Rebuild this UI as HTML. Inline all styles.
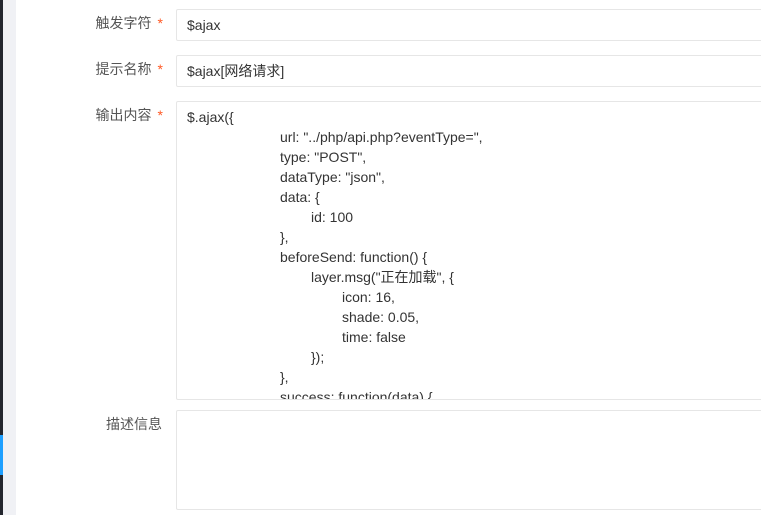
<!DOCTYPE html><html><head><meta charset="utf-8"><style>
body{margin:0;width:761px;height:515px;overflow:hidden;background:#fff;font-family:"Liberation Sans","Noto Sans CJK SC",sans-serif;font-size:14px;color:#333;position:relative}
.dk{position:absolute;left:0;top:0;width:3px;height:515px;background:#23262e}
.gr{position:absolute;left:3px;top:0;width:13px;height:515px;background:#f0f1f5}
.bl{position:absolute;left:0;top:435px;width:3px;height:40px;background:#1e9fff}
.lb{position:absolute;right:600px;color:#555;white-space:nowrap;line-height:20px}
.lb i{font-style:normal;color:#ff5722;margin-left:6px}
.in{position:absolute;left:176px;width:600px;border:1px solid #e6e6e6;border-radius:2px;box-sizing:border-box;overflow:hidden}
.t{position:absolute;white-space:pre;line-height:20px;height:20px}
</style></head><body>
<div class="dk"></div><div class="gr"></div><div class="bl"></div>
<div class="lb" style="top:13px;right:598px">触发字符<i>*</i></div>
<div class="lb" style="top:59px;right:598px">提示名称<i>*</i></div>
<div class="lb" style="top:105px;right:598px">输出内容<i>*</i></div>
<div class="lb" style="top:414px;right:599px">描述信息</div>
<div class="in" style="top:9px;height:32px"><div class="t" style="left:10px;top:5px">$ajax</div></div>
<div class="in" style="top:55px;height:32px"><div class="t" style="left:10px;top:5px">$ajax[网络请求]</div></div>
<div class="in" style="top:101px;height:299px">
<div class="t" style="left:10px;top:5px">$.ajax({</div>
<div class="t" style="left:103px;top:25px">url: "../php/api.php?eventType=",</div>
<div class="t" style="left:103px;top:45px">type: "POST",</div>
<div class="t" style="left:103px;top:65px">dataType: "json",</div>
<div class="t" style="left:103px;top:85px">data: {</div>
<div class="t" style="left:134px;top:105px">id: 100</div>
<div class="t" style="left:103px;top:125px">},</div>
<div class="t" style="left:103px;top:145px">beforeSend: function() {</div>
<div class="t" style="left:134px;top:165px">layer.msg("正在加载", {</div>
<div class="t" style="left:165px;top:185px">icon: 16,</div>
<div class="t" style="left:165px;top:205px">shade: 0.05,</div>
<div class="t" style="left:165px;top:225px">time: false</div>
<div class="t" style="left:134px;top:245px">});</div>
<div class="t" style="left:103px;top:265px">},</div>
<div class="t" style="left:103px;top:285px">success: function(data) {</div>
</div>
<div class="in" style="top:410px;height:100px"></div>
</body></html>
